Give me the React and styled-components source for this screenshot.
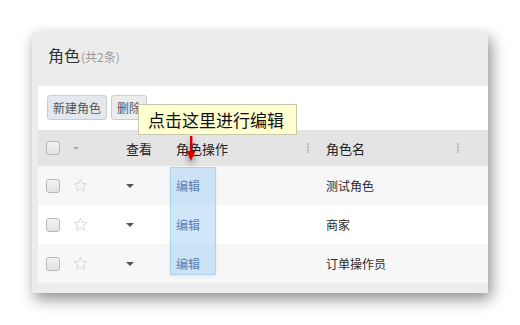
import React from "react"
import styled, { createGlobalStyle } from "styled-components"

const Global = createGlobalStyle`
  html, body {
    margin: 0;
    padding: 0;
    background: #fff;
  }
  body {
    font-family: "Noto Sans CJK SC", "Liberation Sans", sans-serif;
    color: #333;
  }
`

const Page = styled.div`
  width: 520px;
  height: 325px;
  padding: 32px 0 0 32px;
  box-sizing: border-box;
`

const Panel = styled.div`
  position: relative;
  width: 456px;
  background: #ececec;
  padding-bottom: 10px;
  box-shadow: 3px 6px 14px rgba(0, 0, 0, 0.45);
`

const PanelHead = styled.div`
  height: 54px;
  display: flex;
  align-items: center;
  padding: 0 0 9px 16px;
  box-sizing: border-box;
`

const Title = styled.span`
  font-size: 16px;
  color: #333;
`

const Count = styled.span`
  font-size: 12px;
  color: #999;
  margin-left: 1px;
  margin-top: 3px;
`

const Body = styled.div`
  margin-left: 6px;
  background: #fff;
`

const Toolbar = styled.div`
  height: 44px;
  display: flex;
  gap: 4px;
  padding: 9px 0 0 9px;
  box-sizing: border-box;
`

const Btn = styled.div`
  height: 25px;
  padding: 0 5px;
  display: flex;
  align-items: center;
  font-size: 12px;
  color: #555;
  background: ${(p) => (p.$primary ? "#e3e8ee" : "#ececec")};
  border: 1px solid #ccc;
  border-radius: 3px;
  box-sizing: border-box;
`

const Table = styled.div`
  position: relative;
`

const Row = styled.div`
  display: grid;
  grid-template-columns: 30px 52px 50px 148px 1fr;
  align-items: center;
  height: ${(p) => (p.$head ? 36 : 39)}px;
  background: ${(p) => (p.$head ? "#e4e4e4" : p.$odd ? "#f7f7f7" : "#fff")};
  font-size: ${(p) => (p.$head ? 13 : 12)}px;
  color: ${(p) => (p.$head ? "#222" : "#2a2a2a")};
`

const Cell = styled.div`
  display: flex;
  align-items: center;
  justify-content: space-between;
  padding-left: ${(p) => p.$pad || 0}px;
  padding-right: ${(p) => p.$padR || 0}px;
`

const Check = styled.div`
  width: 12px;
  height: 12px;
  margin-left: 8px;
  border: 1px solid #b8b8b8;
  border-radius: 3px;
  background: linear-gradient(#f3f3f3, #e2e2e2);
`

const SortArrow = styled.div`
  width: 0;
  height: 0;
  margin-left: 5px;
  border-left: 3px solid transparent;
  border-right: 3px solid transparent;
  border-top: 3px solid #aaa;
`

const Caret = styled.div`
  width: 0;
  height: 0;
  margin-left: 6px;
  border-left: 4px solid transparent;
  border-right: 4px solid transparent;
  border-top: 4px solid #555;
`

const Grip = styled.div`
  width: 2px;
  height: 10px;
  background: repeating-linear-gradient(#bbb 0 2px, #d6d6d6 2px 3px);
`

const EditLink = styled.span`
  position: relative;
  z-index: 1;
  color: #5a7db5;
`

const Highlight = styled.div`
  position: absolute;
  left: 132px;
  top: 37px;
  width: 46px;
  height: 108px;
  background: rgba(170, 212, 245, 0.55);
  border: 1px solid rgba(150, 200, 240, 0.6);
  box-sizing: border-box;
  box-shadow: 0 1px 3px rgba(0, 0, 0, 0.08);
  pointer-events: none;
`

const Tip = styled.div`
  position: absolute;
  left: 106px;
  top: 72px;
  width: 159px;
  height: 31px;
  padding-left: 9px;
  display: flex;
  align-items: center;
  background: #ffffd0;
  border: 1px solid #c8c8b0;
  font-size: 17px;
  color: #111;
  white-space: nowrap;
  box-sizing: border-box;
`

const Arrow = styled.svg`
  position: absolute;
  left: 154px;
  top: 104px;
  filter: drop-shadow(0 4px 3px rgba(0, 0, 0, 0.45));
`

function Star() {
  return (
    <svg width="15" height="15" viewBox="0 0 24 24" style={{ marginLeft: 5 }}>
      <polygon
        points="12,2 14.9,8.6 22,9.3 16.6,14 18.2,21 12,17.3 5.8,21 7.4,14 2,9.3 9.1,8.6"
        fill="none"
        stroke="#d8d8d8"
        strokeWidth="1.6"
        strokeLinejoin="round"
      />
    </svg>
  )
}

const rows = ["测试角色", "商家", "订单操作员"]

export default function App() {
  return (
    <Page>
      <Global />
      <Panel>
        <PanelHead>
          <Title>角色</Title>
          <Count>(共2条)</Count>
        </PanelHead>
        <Body>
          <Toolbar>
            <Btn $primary>新建角色</Btn>
            <Btn>删除</Btn>
          </Toolbar>
          <Table>
            <Row $head>
              <Cell>
                <Check />
              </Cell>
              <Cell>
                <SortArrow />
              </Cell>
              <Cell $pad={6}>查看</Cell>
              <Cell $pad={6} $padR={9}>
                角色操作
                <Grip />
              </Cell>
              <Cell $pad={8} $padR={29}>
                角色名
                <Grip />
              </Cell>
            </Row>
            {rows.map((name, i) => (
              <Row key={name} $odd={i % 2 === 0}>
                <Cell>
                  <Check />
                </Cell>
                <Cell>
                  <Star />
                </Cell>
                <Cell>
                  <Caret />
                </Cell>
                <Cell $pad={6}>
                  <EditLink>编辑</EditLink>
                </Cell>
                <Cell $pad={8}>{name}</Cell>
              </Row>
            ))}
            <Highlight />
          </Table>
        </Body>
        <Tip>点击这里进行编辑</Tip>
        <Arrow width="10" height="26" viewBox="0 0 10 26">
          <rect x="4" y="0" width="2.4" height="17" fill="#d40000" />
          <polygon points="0.5,15 9.5,15 5,25" fill="#d40000" />
        </Arrow>
      </Panel>
    </Page>
  )
}
